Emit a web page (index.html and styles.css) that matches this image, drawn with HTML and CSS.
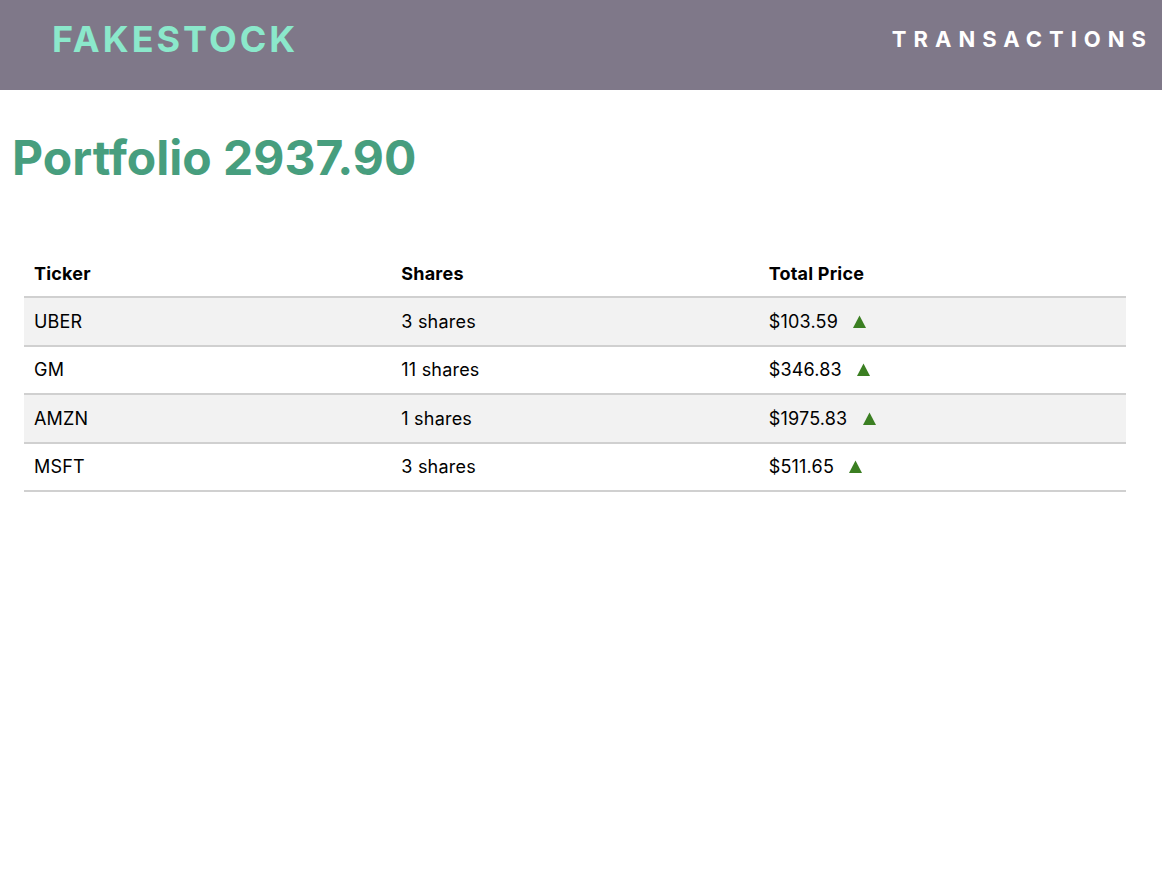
FILE: index.html
```html
<!DOCTYPE html>
<html>
<head>
<meta charset="utf-8">
<link rel="stylesheet" href="styles.css">
</head>
<body>
<header class="topbar">
  <div class="logo">FAKESTOCK</div>
  <nav class="nav">TRANSACTIONS</nav>
</header>
<main class="content">
  <h1 class="title">Portfolio 2937.90</h1>
  <table class="holdings">
    <thead>
      <tr><th>Ticker</th><th>Shares</th><th>Total Price</th></tr>
    </thead>
    <tbody>
      <tr><td>UBER</td><td>3 shares</td><td>$103.59 <svg class="up" viewBox="0 0 12 12" width="13" height="13"><path d="M6 0.5 L12 12 L0 12 Z"/></svg></td></tr>
      <tr><td>GM</td><td>11 shares</td><td>$346.83 <svg class="up" viewBox="0 0 12 12" width="13" height="13"><path d="M6 0.5 L12 12 L0 12 Z"/></svg></td></tr>
      <tr><td>AMZN</td><td>1 shares</td><td>$1975.83 <svg class="up" viewBox="0 0 12 12" width="13" height="13"><path d="M6 0.5 L12 12 L0 12 Z"/></svg></td></tr>
      <tr><td>MSFT</td><td>3 shares</td><td>$511.65 <svg class="up" viewBox="0 0 12 12" width="13" height="13"><path d="M6 0.5 L12 12 L0 12 Z"/></svg></td></tr>
    </tbody>
  </table>
</main>
</body>
</html>
```
FILE: styles.css
```css
* { box-sizing: border-box; }
body {
  margin: 0;
  font-family: Inter, "Noto Sans", sans-serif;
  color: #000;
  background: #fff;
}
.topbar {
  height: 90px;
  background: #7f7889;
  display: flex;
  align-items: center;
  justify-content: space-between;
  padding: 0 9px 12px 52px;
}
.logo {
  font-size: 36px;
  font-weight: 700;
  letter-spacing: 3px;
  color: #8be8cb;
}
.nav {
  font-size: 22px;
  font-weight: 700;
  letter-spacing: 7px;
  color: #fff;
}
.content {
  padding: 0 12px;
}
.title {
  margin: 36px 0 0;
  font-size: 48px;
  font-weight: 700;
  line-height: 64px;
  color: #479e7e;
}
.holdings {
  margin: 60px 12px 0;
  width: 1102px;
  border-collapse: collapse;
  table-layout: fixed;
  font-size: 18px;
  letter-spacing: 0.2px;
}
.holdings th, .holdings td {
  text-align: left;
  padding: 0 10px;
  height: 48.5px;
  border-bottom: 2px solid #d0d0d0;
}
.holdings th {
  font-weight: 700;
  height: 47px;
}
.holdings tbody tr:nth-child(odd) td {
  background: #f2f2f2;
}
.up {
  fill: #3b7f22;
  margin-left: 10px;
  vertical-align: 0;
}
```
